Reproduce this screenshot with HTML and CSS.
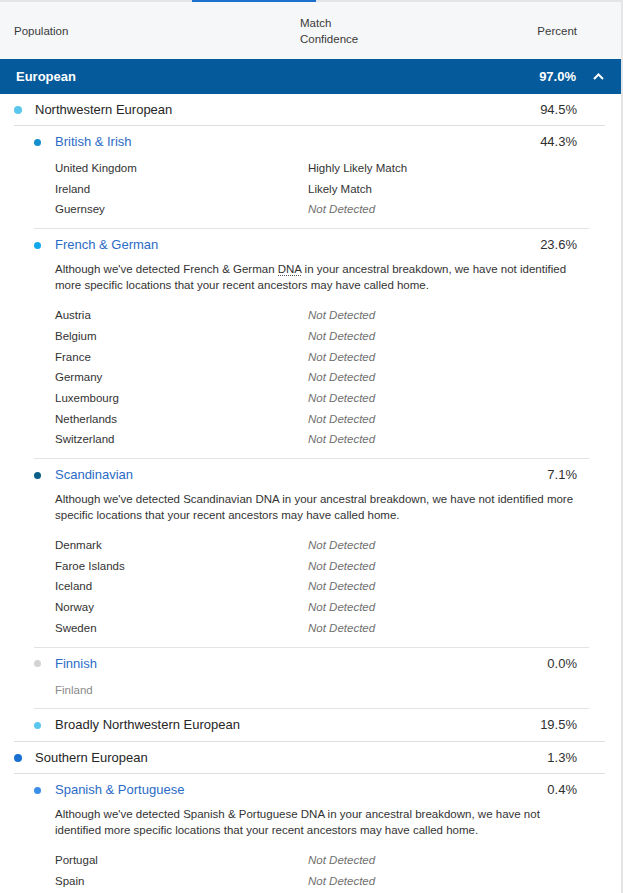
FILE: index.html
```html
<!DOCTYPE html>
<html lang="en">
<head>
<meta charset="utf-8">
<title>Ethnicity breakdown</title>
<link rel="stylesheet" href="styles.css">
</head>
<body>
<div class="page">
  <div class="tabs"><span class="tab-active"></span></div>
  <div class="thead">
    <div class="th">Population</div>
    <div class="th">Match<br>Confidence</div>
    <div class="th th-pct">Percent</div>
  </div>
  <div class="region-bar">
    <span class="region-name">European</span>
    <span class="region-pct">97.0%</span>
    <svg class="chev" width="11" height="7" viewBox="0 0 11 7"><polyline points="1,6 5.5,1.5 10,6" fill="none" stroke="#fff" stroke-width="2"/></svg>
  </div>
  <div class="groups">
    <section class="group">
      <div class="group-head">
        <span class="dot dot-nw"></span>
        <span class="group-name">Northwestern European</span>
        <span class="pct">94.5%</span>
      </div>
      <div class="subs">
        <div class="sub">
          <div class="sub-head">
            <span class="dot sdot dot-bi"></span>
            <span class="sub-name">British &amp; Irish</span>
            <span class="pct">44.3%</span>
          </div>
          <div class="sub-body">
            <div class="locs">
              <div class="loc"><span>United Kingdom</span><span>Highly Likely Match</span></div>
              <div class="loc"><span>Ireland</span><span>Likely Match</span></div>
              <div class="loc"><span>Guernsey</span><span class="nd">Not Detected</span></div>
            </div>
          </div>
        </div>
        <div class="sub">
          <div class="sub-head">
            <span class="dot sdot dot-fg"></span>
            <span class="sub-name">French &amp; German</span>
            <span class="pct">23.6%</span>
          </div>
          <div class="sub-body">
            <p class="desc">Although we've detected French &amp; German <span class="abbr">DNA</span> in your ancestral breakdown, we have not identified more specific locations that your recent ancestors may have called home.</p>
            <div class="locs">
              <div class="loc"><span>Austria</span><span class="nd">Not Detected</span></div>
              <div class="loc"><span>Belgium</span><span class="nd">Not Detected</span></div>
              <div class="loc"><span>France</span><span class="nd">Not Detected</span></div>
              <div class="loc"><span>Germany</span><span class="nd">Not Detected</span></div>
              <div class="loc"><span>Luxembourg</span><span class="nd">Not Detected</span></div>
              <div class="loc"><span>Netherlands</span><span class="nd">Not Detected</span></div>
              <div class="loc"><span>Switzerland</span><span class="nd">Not Detected</span></div>
            </div>
          </div>
        </div>
        <div class="sub">
          <div class="sub-head">
            <span class="dot sdot dot-sc"></span>
            <span class="sub-name">Scandinavian</span>
            <span class="pct">7.1%</span>
          </div>
          <div class="sub-body">
            <p class="desc">Although we've detected Scandinavian DNA in your ancestral breakdown, we have not identified more specific locations that your recent ancestors may have called home.</p>
            <div class="locs">
              <div class="loc"><span>Denmark</span><span class="nd">Not Detected</span></div>
              <div class="loc"><span>Faroe Islands</span><span class="nd">Not Detected</span></div>
              <div class="loc"><span>Iceland</span><span class="nd">Not Detected</span></div>
              <div class="loc"><span>Norway</span><span class="nd">Not Detected</span></div>
              <div class="loc"><span>Sweden</span><span class="nd">Not Detected</span></div>
            </div>
          </div>
        </div>
        <div class="sub">
          <div class="sub-head">
            <span class="dot sdot dot-fi"></span>
            <span class="sub-name">Finnish</span>
            <span class="pct">0.0%</span>
          </div>
          <div class="sub-body">
            <div class="locs">
              <div class="loc loc-zero"><span>Finland</span><span></span></div>
            </div>
          </div>
        </div>
        <div class="sub">
          <div class="sub-head">
            <span class="dot sdot dot-nw"></span>
            <span class="sub-name sub-plain">Broadly Northwestern European</span>
            <span class="pct">19.5%</span>
          </div>
        </div>
      </div>
    </section>
    <section class="group">
      <div class="group-head">
        <span class="dot dot-se"></span>
        <span class="group-name">Southern European</span>
        <span class="pct">1.3%</span>
      </div>
      <div class="subs">
        <div class="sub">
          <div class="sub-head">
            <span class="dot sdot dot-sp"></span>
            <span class="sub-name">Spanish &amp; Portuguese</span>
            <span class="pct">0.4%</span>
          </div>
          <div class="sub-body">
            <p class="desc">Although we've detected Spanish &amp; Portuguese DNA in your ancestral breakdown, we have not identified more specific locations that your recent ancestors may have called home.</p>
            <div class="locs">
              <div class="loc"><span>Portugal</span><span class="nd">Not Detected</span></div>
              <div class="loc"><span>Spain</span><span class="nd">Not Detected</span></div>
            </div>
          </div>
        </div>
      </div>
    </section>
  </div>
</div>
</body>
</html>
```
FILE: styles.css
```css
* { box-sizing: border-box; }
html, body { margin: 0; padding: 0; background: #fff; }
body {
  font-family: "Liberation Sans", Arial, sans-serif;
  color: #2f2f2f;
  overflow: hidden;
}
.page {
  width: 623px;
  min-height: 893px;
  border-right: 2px solid #e4e5e7;
}
.tabs {
  height: 2px;
  background: #e3e5e8;
  position: relative;
}
.tab-active {
  position: absolute;
  left: 192px;
  top: 0;
  width: 124px;
  height: 2px;
  background: #1b72cc;
}
.thead {
  height: 57px;
  background: #f6f7f9;
  display: grid;
  grid-template-columns: 286px 1fr auto;
  align-items: center;
  padding: 0 44px 0 14px;
}
.th {
  font-size: 11.5px;
  line-height: 16px;
  color: #3a3a3a;
}
.th-pct { text-align: right; }
.region-bar {
  height: 35px;
  background: #045a9a;
  color: #fff;
  display: flex;
  align-items: center;
  padding: 0 17px 0 16px;
}
.region-name {
  flex: 1;
  font-weight: bold;
  font-size: 13px;
}
.region-pct {
  font-weight: bold;
  font-size: 13px;
}
.chev { margin-left: 17px; display: block; }
.groups { padding: 0 16px 0 14px; }
.group { border-bottom: 1px solid #dedede; }
.group-head {
  display: flex;
  align-items: center;
  padding: 8px 28px 7px 0;
  border-bottom: 1px solid #dedede;
  font-size: 13px;
  line-height: 16px;
}
.dot {
  width: 8px;
  height: 8px;
  border-radius: 50%;
  flex: none;
  margin-right: 13px;
}
.sdot {
  width: 7px;
  height: 7px;
  margin-right: 14px;
}
.dot-nw { background: #5ac7ef; }
.dot-bi { background: #138ecf; }
.dot-fg { background: #12a8ec; }
.dot-sc { background: #0b5e87; }
.dot-fi { background: #d3d3d3; }
.dot-se { background: #196fd2; }
.dot-sp { background: #3a8de8; }
.group-name { flex: 1; color: #262626; }
.pct { color: #2f2f2f; }
.subs { margin: 0 16px 0 20px; }
.sub {
  padding: 8px 12px 8px 0;
  border-top: 1px solid #e3e3e3;
}
.sub:first-child { border-top: none; }
.sub-head {
  display: flex;
  align-items: center;
  font-size: 13px;
  line-height: 16px;
}
.sub-name { flex: 1; color: #2b6bc6; }
.sub-name.sub-plain { color: #262626; }
.sub-body { padding-left: 21px; }
.desc {
  margin: 8px 0 12px;
  font-size: 11.5px;
  line-height: 16px;
  color: #333;
}
.abbr { border-bottom: 1px dotted #555; }
.sub-head + .sub-body > .locs:first-child { margin-top: 8px; }
.loc {
  display: grid;
  grid-template-columns: 253px 1fr;
  font-size: 11.5px;
  line-height: 20.7px;
  color: #333;
}
.nd { font-style: italic; color: #707070; }
.loc-zero { color: #8a8a8a; }
```
